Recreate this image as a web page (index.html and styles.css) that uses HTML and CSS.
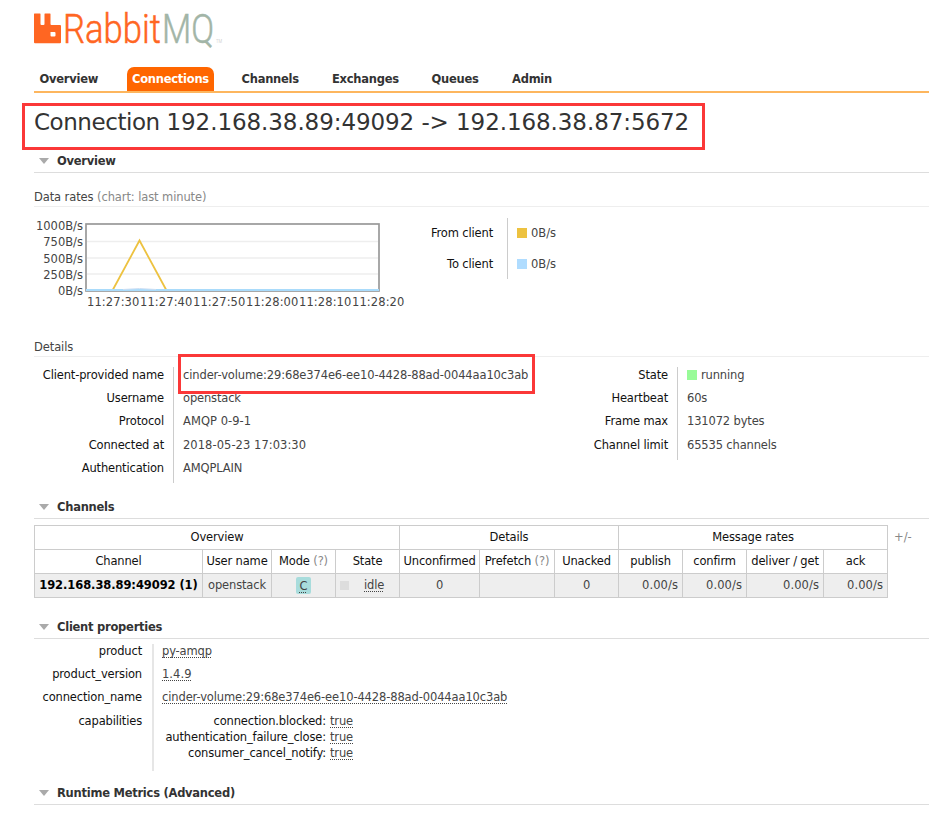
FILE: index.html
```html
<!DOCTYPE html>
<html lang="en">
<head>
<meta charset="utf-8">
<title>RabbitMQ Management</title>
<link rel="stylesheet" href="styles.css">
</head>
<body>
<header>
  <svg class="logo" width="195" height="52" viewBox="0 -8 195 52">
    <path fill="#ff6622" d="M0 4Q0 3.500 .5 3.500H6Q6.500 3.500 6.500 4V14Q6.500 15 7.500 15H9.500Q10.500 15 10.500 14V4Q10.500 3.500 11 3.500H16Q16.500 3.500 16.500 4V14Q16.500 15 17.500 15H26Q27 15 27 16V32.300Q27 33.300 26 33.300H1Q0 33.300 0 32.300ZM16.500 22V25.500Q16.500 26.500 17.500 26.500H20.500Q21.500 26.500 21.500 25.500V23Q21.500 22 20.500 22Z"/>
    <text class="logo-rabbit" x="29" y="32.800" textLength="98" lengthAdjust="spacingAndGlyphs">Rabbit</text>
    <text class="logo-mq" x="128" y="32.800" textLength="52" lengthAdjust="spacingAndGlyphs">MQ</text>
    <text class="logo-tm" x="182" y="32.500" textLength="6" lengthAdjust="spacingAndGlyphs">TM</text>
  </svg>
  <nav class="tabs">
    <a class="t1">Overview</a><a class="t2 selected">Connections</a><a class="t3">Channels</a><a class="t4">Exchanges</a><a class="t5">Queues</a><a class="t6">Admin</a>
  </nav>
</header>
<main>
  <div class="title"><h1><span>Connection </span>192.168.38.89:49092 -&gt; 192.168.38.87:5672</h1><i class="mark mark-title"></i></div>

  <h2>Overview</h2>
  <section class="overview">
    <h3>Data rates <span>(chart: last minute)</span></h3>
    <div class="rates">
      <div class="chart">
        <div class="plot">
          <div class="ylabels"><span>1000B/s</span><span>750B/s</span><span>500B/s</span><span>250B/s</span><span>0B/s</span></div>
          <svg width="295" height="70" viewBox="0 0 295 70">
            <path d="M2 18.500H293M2 35H293M2 51H293" stroke="#eeeeee" stroke-width="1.300"/>
            <rect x="1" y="1" width="293" height="67" fill="none" stroke="#999" stroke-width="1.700"/>
            <path d="M28 66.500L54.500 17.500L81 66.500" fill="none" stroke="#edc240" stroke-width="1.800"/>
            <path d="M1 67H294" stroke="#a9dbfb" stroke-width="2"/>
            <path d="M38 66.500L54.500 65.500L71 66.500" stroke="#cddff4" fill="none"/>
          </svg>
        </div>
        <div class="xlabels"><span>11:27:30</span><span>11:27:40</span><span>11:27:50</span><span>11:28:00</span><span>11:28:10</span><span>11:28:20</span></div>
      </div>
      <dl class="facts legend">
        <dt>From client</dt><dd><i class="sq yellow"></i>0B/s</dd>
        <dt>To client</dt><dd><i class="sq blue"></i>0B/s</dd>
      </dl>
    </div>
    <h3>Details</h3>
    <div class="details">
      <dl class="facts identity">
        <dt>Client-provided name</dt><dd class="uuid">cinder-volume:29:68e374e6-ee10-4428-88ad-0044aa10c3ab<i class="mark mark-name"></i></dd>
        <dt>Username</dt><dd>openstack</dd>
        <dt>Protocol</dt><dd class="date">AMQP 0-9-1</dd>
        <dt>Connected at</dt><dd class="date">2018-05-23 17:03:30</dd>
        <dt>Authentication</dt><dd>AMQPLAIN</dd>
      </dl>
      <dl class="facts limits">
        <dt>State</dt><dd><i class="sq green"></i>running</dd>
        <dt>Heartbeat</dt><dd>60s</dd>
        <dt>Frame max</dt><dd>131072 bytes</dd>
        <dt>Channel limit</dt><dd>65535 channels</dd>
      </dl>
    </div>
  </section>

  <h2>Channels</h2>
  <div class="channels">
    <table>
      <colgroup><col class="w168"><col class="w69"><col class="w64"><col class="w64"><col class="w80"><col class="w75"><col class="w64"><col class="w64"><col class="w64"><col class="w77"><col class="w64"></colgroup>
      <thead>
        <tr><th colspan="4">Overview</th><th colspan="3">Details</th><th colspan="4">Message rates</th></tr>
        <tr><th>Channel</th><th>User name</th><th>Mode <span>(?)</span></th><th>State</th><th>Unconfirmed</th><th>Prefetch <span>(?)</span></th><th>Unacked</th><th>publish</th><th>confirm</th><th>deliver / get</th><th>ack</th></tr>
      </thead>
      <tbody>
        <tr><td><b>192.168.38.89:49092 (1)</b></td><td>openstack</td><td><span class="mode"><abbr>C</abbr></span></td><td><div class="state"><i></i><abbr>idle</abbr></div></td><td>0</td><td></td><td>0</td><td class="r">0.00/s</td><td class="r">0.00/s</td><td class="r">0.00/s</td><td class="r">0.00/s</td></tr>
      </tbody>
    </table>
    <span class="plus">+/-</span>
  </div>

  <h2>Client properties</h2>
  <dl class="facts props">
    <dt>product</dt><dd><abbr>py-amqp</abbr></dd>
    <dt>product_version</dt><dd class="date"><abbr>1.4.9</abbr></dd>
    <dt>connection_name</dt><dd class="uuid"><abbr>cinder-volume:29:68e374e6-ee10-4428-88ad-0044aa10c3ab</abbr></dd>
    <dt>capabilities</dt><dd class="caps">
      <span>connection.blocked:</span><abbr>true</abbr>
      <span>authentication_failure_close:</span><abbr>true</abbr>
      <span>consumer_cancel_notify:</span><abbr>true</abbr>
    </dd>
  </dl>
  <h2>Runtime Metrics (Advanced)</h2>
</main>
</body>
</html>
```
FILE: styles.css
```css
* { box-sizing: border-box; }
body { margin: 0; padding-left: 34px; background: #fff; color: #444; font: 11.5px/16px Verdana, "DejaVu Sans", sans-serif; letter-spacing: -0.15px; height: 821px; overflow: hidden; }
h1, h2, h3, dl, dd { margin: 0; }
abbr { text-decoration: underline dotted 1px; text-decoration-skip-ink: none; text-underline-offset: 2px; }
header { height: 93px; padding-top: 2px; border-bottom: 2px solid #fdb65e; display: flex; flex-direction: column; justify-content: space-between; }
.logo { display: block; }
.logo text { font-family: Roboto, sans-serif; font-weight: 300; font-size: 40px; letter-spacing: 0; }
.logo .logo-rabbit { fill: #ff6622; stroke: #ff6622; stroke-width: 0.5px; }
.logo .logo-mq { fill: #a2b5a7; stroke: #a2b5a7; stroke-width: 0.5px; }
.logo .logo-tm { fill: #bbb; font-size: 5px; }
.tabs { display: flex; height: 24px; font-weight: bold; color: #333; letter-spacing: -0.25px; }
.tabs a { line-height: 25px; padding-left: 5.500px; white-space: nowrap; }
.t1 { width: 92.500px; }
.t2 { width: 87px; }
.t3 { width: 113px; }
.tabs .t3 { padding-left: 28px; }
.t4 { width: 99.500px; }
.t5 { width: 80.500px; }
.tabs .selected { background: #f60; color: #fff; border-radius: 7px 7px 0 0; }
.title { position: relative; height: 57px; }
h1 { font-size: 23px; font-weight: normal; line-height: 58px; white-space: nowrap; color: #333; letter-spacing: -0.08px; }
h1 span { letter-spacing: -0.45px; }
.mark { position: absolute; border: 3px solid #fb3838; }
.mark-title { left: -12px; top: 10px; width: 683px; height: 47px; }
h2 { height: 23px; font-size: 11.5px; line-height: 22px; color: #333; border-bottom: 1px solid #ddd; display: flex; align-items: center; letter-spacing: -0.25px; }
h2::before { content: ""; border: 5.500px solid transparent; border-top: 6px solid #aaa; border-bottom: 0; margin: 0 8px 0 5px; }
h3 { height: 18px; border-bottom: 1px solid #eee; font-size: 11.5px; line-height: 16px; font-weight: normal; letter-spacing: -0.1px; }
h3 span, th span { color: #888; }
.overview { padding-top: 16px; height: 323px; }
.rates { height: 132px; padding-top: 11px; display: flex; }
.chart { width: 385px; padding-top: 5px; letter-spacing: 0; }
.plot { display: flex; }
.ylabels { width: 49px; margin: -5px 2px 0 0; display: grid; grid-auto-rows: 16.250px; text-align: right; height: 76px; }
.xlabels { display: grid; grid-template-columns: repeat(6, 53px); margin-left: 53px; letter-spacing: 0.1px; }
.facts { display: grid; grid-auto-rows: 23.200px; align-content: start; position: relative; }
.facts dt { color: #111; text-align: right; padding-right: 9px; white-space: nowrap; }
.facts dd { border-left: 1px solid #ccc; padding-left: 9px; white-space: nowrap; }
.facts .uuid { letter-spacing: -0.12px; }
.facts .date { letter-spacing: 0.05px; }
.legend { grid-template-columns: 88px 150px; grid-auto-rows: 30.500px; line-height: 31px; }
.facts.legend dt { padding-right: 14px; }
.legend dd { letter-spacing: 0; }
.sq { display: inline-block; width: 10px; height: 10px; margin-right: 4px; vertical-align: -1px; }
.yellow { background: #edc240; }
.blue { background: #afdcff; }
.green { background: #98fb98; }
.details { display: flex; padding-top: 10px; }
.identity { grid-template-columns: 139px 366px; }
.limits { grid-template-columns: 138px 200px; }
.mark-name { left: 144px; top: -13px; width: 357px; height: 40px; }
.channels { display: flex; height: 97px; padding-top: 6px; }
table { width: 854px; height: 73px; table-layout: fixed; border-collapse: collapse; }
.w168 { width: 168px; } .w69 { width: 69px; } .w64 { width: 64px; } .w80 { width: 80px; } .w75 { width: 75px; } .w77 { width: 77px; }
th, td { height: 24px; padding: 0 0 1px; border: 1px solid #ccc; text-align: center; white-space: nowrap; font-weight: normal; }
th { color: #111; }
td { background: #eee; border-top: 1px solid #ddd; }
td b { color: #000; letter-spacing: -0.08px; }
td.r { text-align: right; padding-right: 4px; letter-spacing: 0.1px; }
.mode { display: inline-block; background: #a8dcdc; border-radius: 2px; padding: 1px 3px; width: 15px; height: 17px; }
.state { display: flex; align-items: center; padding-left: 4px; gap: 15px; }
.state i { width: 9px; height: 9px; background: #ddd; }
.plus { color: #888; margin: 4px 0 0 6px; letter-spacing: 0; }
.props { grid-template-columns: 118px 500px; grid-template-rows: 23.200px 23.200px 23.200px 57px; padding-top: 5px; height: 143px; line-height: 14px; }
.facts.props dt { padding-right: 10px; }
.facts.props dd { border-left: 2px solid #e6e6e6; padding-left: 8px; }
.caps { display: grid; grid-template-columns: 164px auto; justify-content: start; column-gap: 4px; grid-auto-rows: 16px; }
.caps span { text-align: right; color: #111; }
```
